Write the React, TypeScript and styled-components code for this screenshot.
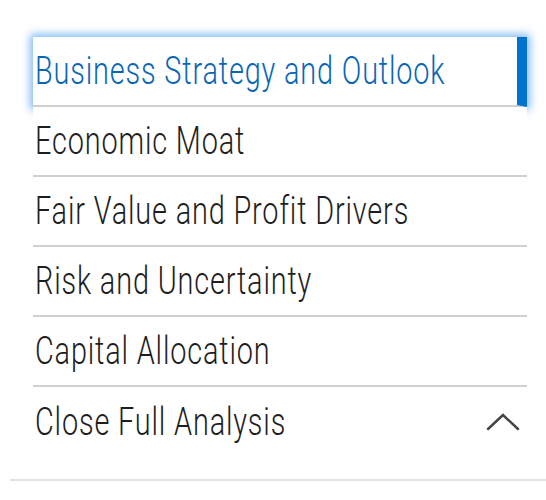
import React from 'react';
import styled, { createGlobalStyle } from 'styled-components';

const GlobalStyle = createGlobalStyle`
  html, body {
    margin: 0;
    padding: 0;
    background: #ffffff;
  }
  body {
    font-family: "Roboto", "Liberation Sans", sans-serif;
  }
`;

const Page = styled.div`
  width: 546px;
  height: 500px;
  padding-top: 37px;
  box-sizing: border-box;
`;

const Nav = styled.nav`
  margin-left: 10px;
  border-bottom: 2px solid #e3e3e3;
  padding-bottom: 22px;
`;

const List = styled.ul`
  list-style: none;
  margin: 0 19px 0 23px;
  padding: 0;
`;

const Item = styled.li<{ $active?: boolean }>`
  position: relative;
  display: flex;
  align-items: center;
  justify-content: space-between;
  height: 70px;
  box-sizing: border-box;
  border-bottom: 2px solid #cfcfcf;
  padding: 0 7px 0 2px;
  color: ${(p) => (p.$active ? '#0a67b4' : '#1e1e1e')};
  background: #ffffff;
  box-shadow: ${(p) => (p.$active ? '0 0 8px 3px rgba(50, 145, 235, 0.6)' : 'none')};
  border-right: ${(p) => (p.$active ? '10px solid #0073cf' : 'none')};
  &:last-child {
    border-bottom: none;
  }
`;

const Label = styled.span`
  display: inline-block;
  font-size: 38px;
  font-weight: 300;
  letter-spacing: 1.1px;
  white-space: nowrap;
  transform: scaleX(0.76);
  transform-origin: left center;
`;

const Chevron = () => (
  <svg width="34" height="18" viewBox="0 0 34 18" fill="none">
    <path d="M2 16 L17 2 L32 16" stroke="#444" strokeWidth="2.4" strokeLinecap="round" />
  </svg>
);

const sections = [
  'Business Strategy and Outlook',
  'Economic Moat',
  'Fair Value and Profit Drivers',
  'Risk and Uncertainty',
  'Capital Allocation',
];

export default function App() {
  return (
    <>
      <GlobalStyle />
      <Page>
        <Nav>
          <List>
            {sections.map((s, i) => (
              <Item key={s} $active={i === 0}>
                <Label>{s}</Label>
              </Item>
            ))}
            <Item>
              <Label>Close Full Analysis</Label>
              <Chevron />
            </Item>
          </List>
        </Nav>
      </Page>
    </>
  );
}
